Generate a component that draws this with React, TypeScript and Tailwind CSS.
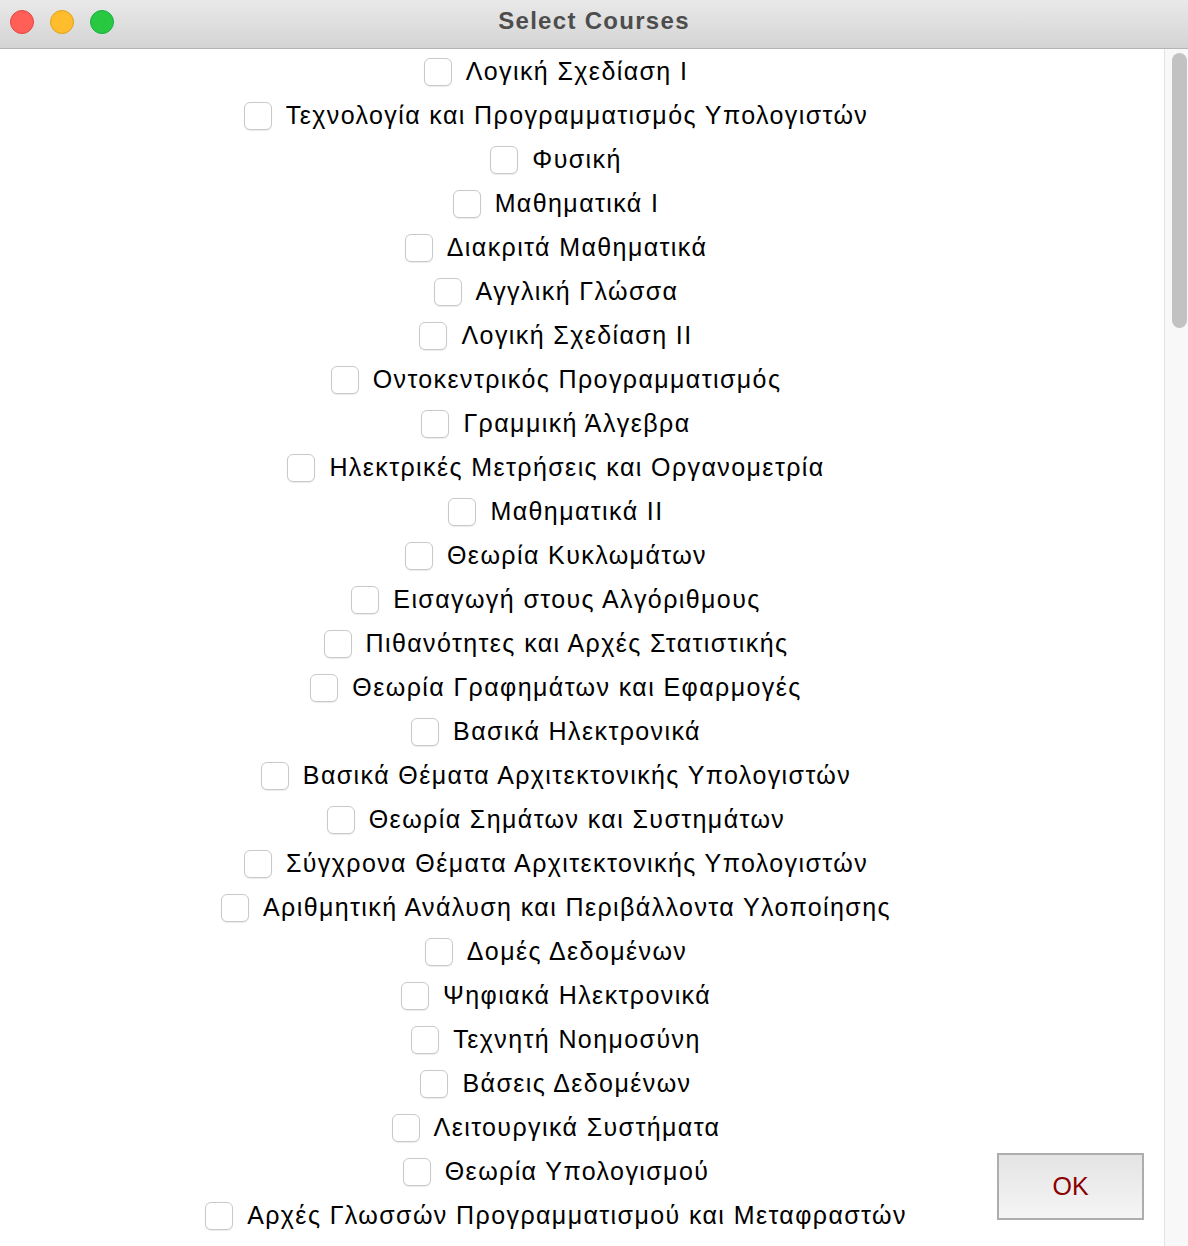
const courses = [
  "Λογική Σχεδίαση Ι",
  "Τεχνολογία και Προγραμματισμός Υπολογιστών",
  "Φυσική",
  "Μαθηματικά Ι",
  "Διακριτά Μαθηματικά",
  "Αγγλική Γλώσσα",
  "Λογική Σχεδίαση ΙΙ",
  "Οντοκεντρικός Προγραμματισμός",
  "Γραμμική Άλγεβρα",
  "Ηλεκτρικές Μετρήσεις και Οργανομετρία",
  "Μαθηματικά ΙΙ",
  "Θεωρία Κυκλωμάτων",
  "Εισαγωγή στους Αλγόριθμους",
  "Πιθανότητες και Αρχές Στατιστικής",
  "Θεωρία Γραφημάτων και Εφαρμογές",
  "Βασικά Ηλεκτρονικά",
  "Βασικά Θέματα Αρχιτεκτονικής Υπολογιστών",
  "Θεωρία Σημάτων και Συστημάτων",
  "Σύγχρονα Θέματα Αρχιτεκτονικής Υπολογιστών",
  "Αριθμητική Ανάλυση και Περιβάλλοντα Υλοποίησης",
  "Δομές Δεδομένων",
  "Ψηφιακά Ηλεκτρονικά",
  "Τεχνητή Νοημοσύνη",
  "Βάσεις Δεδομένων",
  "Λειτουργικά Συστήματα",
  "Θεωρία Υπολογισμού",
  "Αρχές Γλωσσών Προγραμματισμού και Μεταφραστών",
];

function TitleBar() {
  return (
    <div className="relative h-[49px] border-b border-[#b4b4b4] bg-gradient-to-b from-[#e9e9e9] to-[#d4d4d4]">
      <div className="absolute left-[10px] top-[10px] flex gap-[16px]">
        <span className="h-[24px] w-[24px] rounded-full border border-[#e2463f] bg-[#ff5f57]" />
        <span className="h-[24px] w-[24px] rounded-full border border-[#e1a116] bg-[#ffbd2e]" />
        <span className="h-[24px] w-[24px] rounded-full border border-[#14ae46] bg-[#28c940]" />
      </div>
      <div className="pt-[7px] text-center text-[24px] leading-[28px] font-bold tracking-[1.3px] text-[#4d4d4d]">
        Select Courses
      </div>
    </div>
  );
}

function CourseRow({ label }: { label: string }) {
  return (
    <label className="flex h-[44px] cursor-pointer items-center justify-center gap-[14px]">
      <span className="h-[28px] w-[28px] rounded-[6px] border border-[#c9c9c9] bg-white shadow-[0_1px_1px_rgba(0,0,0,0.08)]" />
      <span className="text-[25px] tracking-[1.4px] text-black">{label}</span>
    </label>
  );
}

export default function App() {
  return (
    <div
      className="h-[1246px] w-[1188px] overflow-hidden bg-white"
      style={{ fontFamily: "'Liberation Sans', Arial, sans-serif" }}
    >
      <TitleBar />
      <div className="relative flex h-[1197px]">
        <div className="w-[1112px] pt-[1px]">
          {courses.map((c) => (
            <CourseRow key={c} label={c} />
          ))}
        </div>
        <div className="flex-1" />
        <div className="w-[24px] border-l border-[#e3e3e3] bg-[#f8f8f8] pl-[7px] pt-[4px]">
          <div className="h-[275px] w-[15px] rounded-full bg-[#c2c2c2]" />
        </div>
        <button className="absolute left-[997px] top-[1104px] h-[67px] w-[147px] border-2 border-[#adadad] bg-gradient-to-b from-[#e4e4e4] to-[#f5f5f5] text-[25px] text-[#8b0000]">
          OK
        </button>
      </div>
    </div>
  );
}
